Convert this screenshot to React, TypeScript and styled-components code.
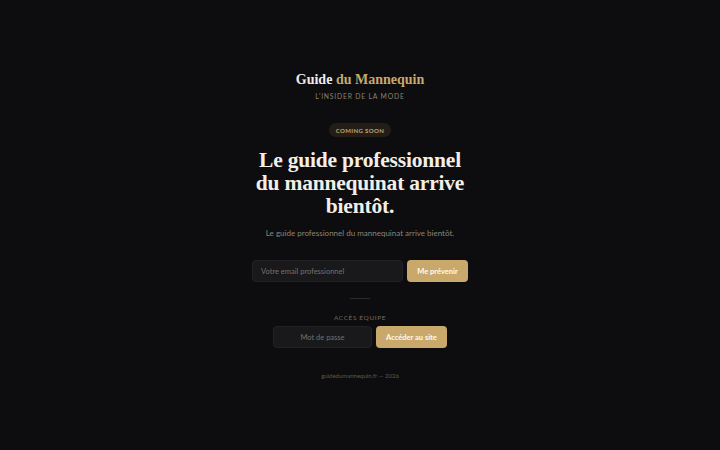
import styled, { createGlobalStyle } from 'styled-components'

const Global = createGlobalStyle`
  html, body { margin: 0; padding: 0; background: #0d0d0f; }
  * { box-sizing: border-box; }
`

const gold = '#c9a96b'
const sans = `"Lato", "Open Sans", sans-serif`
const serif = `"Liberation Serif", "DejaVu Serif", serif`

const Page = styled.main`
  width: 720px;
  height: 450px;
  background: #0d0d0f;
  display: flex;
  flex-direction: column;
  align-items: center;
  padding-top: 70px;
  font-family: ${sans};
`

const Brand = styled.h1`
  margin: 0;
  font-family: ${serif};
  font-weight: 700;
  font-size: 14px;
  line-height: 19px;
  color: #f1ede6;
  span { color: ${gold}; }
`

const Tagline = styled.div`
  margin-top: 3px;
  font-size: 6.8px;
  letter-spacing: 0.8px;
  color: #8a826f;
`

const Badge = styled.div`
  margin-top: 23px;
  height: 14px;
  padding: 0 7px;
  border-radius: 7px;
  background: #221e17;
  color: #c3a66e;
  font-size: 6px;
  font-weight: 700;
  letter-spacing: 0.4px;
  display: flex;
  align-items: center;
`

const Heading = styled.h2`
  margin: 12px 0 0;
  font-family: ${serif};
  font-weight: 700;
  font-size: 21.5px;
  line-height: 23px;
  color: #f3efe8;
  text-align: center;
  letter-spacing: -0.2px;
`

const Sub = styled.p`
  margin: 10px 0 0;
  font-size: 8px;
  color: #8c8475;
`

const Row = styled.form<{ $top: number }>`
  margin-top: ${p => p.$top}px;
  display: flex;
  gap: 4px;
`

const Input = styled.input<{ $w: number; $center?: boolean }>`
  width: ${p => p.$w}px;
  height: 22px;
  border-radius: 4px;
  border: 1px solid #222226;
  background: #19191c;
  color: #ddd;
  font-family: ${sans};
  font-size: 7.5px;
  padding: 0 8px;
  text-align: ${p => (p.$center ? 'center' : 'left')};
  outline: none;
  &::placeholder { color: #74716b; }
`

const Button = styled.button<{ $w: number }>`
  width: ${p => p.$w}px;
  height: 22px;
  border: none;
  border-radius: 4px;
  background: ${gold};
  color: #fffaf0;
  font-family: ${sans};
  font-size: 7.5px;
  font-weight: 700;
`

const Divider = styled.div`
  margin-top: 16px;
  width: 20px;
  height: 1px;
  background: #2a2a2e;
`

const Label = styled.div`
  margin-top: 15px;
  font-size: 6.5px;
  letter-spacing: 0.6px;
  color: #6f6a60;
`

const Footer = styled.footer`
  margin-top: 24px;
  font-size: 6px;
  color: #5f5a4c;
`

export default function App() {
  return (
    <>
      <Global />
      <Page>
        <Brand>Guide <span>du Mannequin</span></Brand>
        <Tagline>L'INSIDER DE LA MODE</Tagline>
        <Badge>COMING SOON</Badge>
        <Heading>
          Le guide professionnel<br />du mannequinat arrive<br />bientôt.
        </Heading>
        <Sub>Le guide professionnel du mannequinat arrive bientôt.</Sub>
        <Row $top={22} onSubmit={e => e.preventDefault()}>
          <Input $w={151} placeholder="Votre email professionnel" />
          <Button $w={61}>Me prévenir</Button>
        </Row>
        <Divider />
        <Label>ACCÈS ÉQUIPE</Label>
        <Row $top={5} onSubmit={e => e.preventDefault()}>
          <Input $w={99} $center type="password" placeholder="Mot de passe" />
          <Button $w={71}>Accéder au site</Button>
        </Row>
        <Footer>guidedumannequin.fr — 2026</Footer>
      </Page>
    </>
  )
}
